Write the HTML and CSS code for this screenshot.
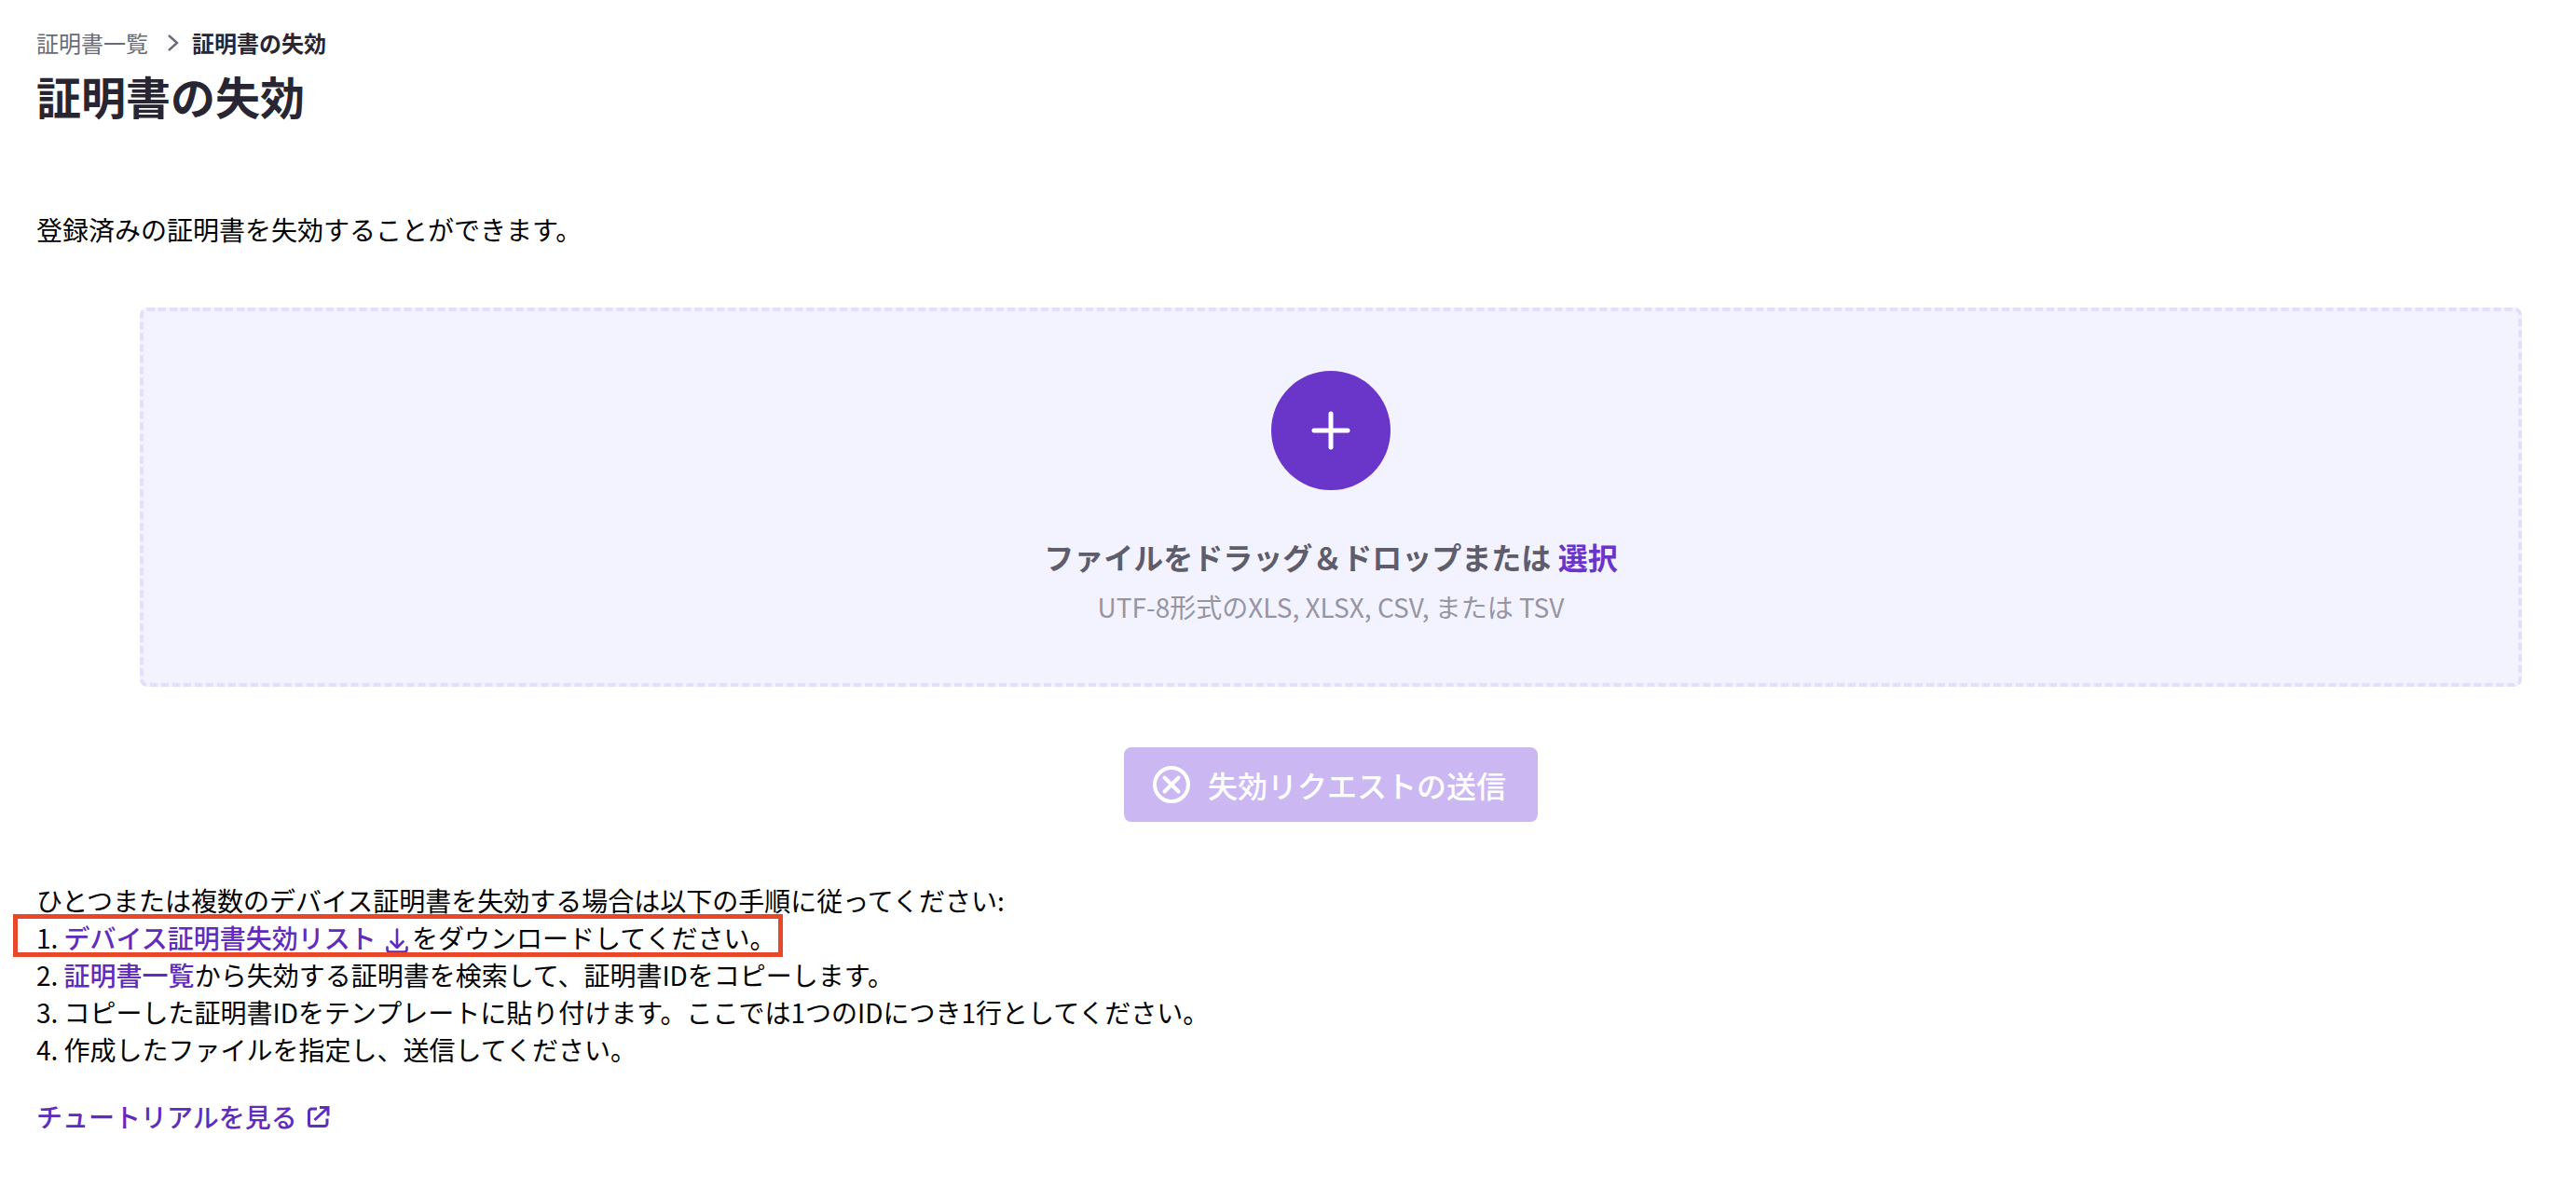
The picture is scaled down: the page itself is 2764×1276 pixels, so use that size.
FILE: index.html
```html
<!DOCTYPE html>
<html lang="ja">
<head>
  <meta charset="UTF-8">
  <title>証明書の失効</title>
  <link rel="stylesheet" href="styles.css">
</head>
<body>
  <div class="breadcrumb">
    <a href="#">証明書一覧</a>
    <svg class="crumb-arrow" viewBox="0 0 16 24" width="16" height="24"><path d="M3 4l9 8-9 8" fill="none" stroke="#6c6a76" stroke-width="2.400"/></svg>
    <strong>証明書の失効</strong>
  </div>
  <h1>証明書の失効</h1>

  <p class="intro">登録済みの証明書を失効することができます。</p>

  <div class="dropzone">
    <div class="add-circle">
      <svg viewBox="0 0 42 42" width="42" height="42"><path d="M21 3v36M3 21h36" fill="none" stroke="#fff" stroke-width="5" stroke-linecap="round"/></svg>
    </div>
    <p class="drop-title">ファイルをドラッグ＆ドロップまたは <a href="#">選択</a></p>
    <p class="drop-sub">UTF-8形式のXLS, XLSX, CSV, または TSV</p>
  </div>

  <div class="actions">
    <button class="submit" disabled>
      <svg viewBox="0 0 40 40" width="40" height="40"><circle cx="20" cy="20" r="18" fill="none" stroke="#fff" stroke-width="4"/><path d="M12.500 12.500l15 15M27.500 12.500l-15 15" fill="none" stroke="#fff" stroke-width="4" stroke-linecap="round"/></svg>
      失効リクエストの送信
    </button>
  </div>

  <div class="steps">
    <div class="highlight"></div>
    <p>ひとつまたは複数のデバイス証明書を失効する場合は以下の手順に従ってください:</p>
    <p>1. <a href="#">デバイス証明書失効リスト
      <svg class="icon-down" viewBox="0 0 24 28" width="24" height="28"><path d="M12 1.500V21M5.500 14.500L12 21l6.500-6.500M1.500 20.500V23a2.500 2.500 0 0 0 2.500 2.500h16a2.500 2.500 0 0 0 2.500-2.500v-2.500" fill="none" stroke="#5f2cbd" stroke-width="2.600" stroke-linecap="round" stroke-linejoin="round"/></svg></a>をダウンロードしてください。</p>
    <p>2. <a href="#">証明書一覧</a>から失効する証明書を検索して、証明書IDをコピーします。</p>
    <p>3. コピーした証明書IDをテンプレートに貼り付けます。ここでは1つのIDにつき1行としてください。</p>
    <p>4. 作成したファイルを指定し、送信してください。</p>
  </div>

  <a class="tutorial" href="#">チュートリアルを見る
    <svg viewBox="0 0 24 24" width="24" height="24"><path d="M10 4H4.500a3 3 0 0 0-3 3v13.500a2 2 0 0 0 2 2H18a3 3 0 0 0 3-3V14.500M7.500 16L22 2.500M13 2.500h9v9" fill="none" stroke="#5f2cbd" stroke-width="3"/></svg>
  </a>
</body>
</html>
```

FILE: styles.css
```css
* {
  margin: 0;
  padding: 0;
  box-sizing: border-box;
  font-family: "Noto Sans CJK JP", "Noto Sans", sans-serif;
}

body {
  background: #fff;
  color: #000;
  width: 2764px;
  height: 1276px;
  padding: 28px 0 0 39px;
  font-size: 28px;
  overflow: hidden;
}

a {
  color: #5f2cbd;
  text-decoration: none;
  font-weight: 500;
}

.breadcrumb {
  display: flex;
  align-items: center;
  height: 36px;
  font-size: 24px;
  line-height: 36px;
}

.breadcrumb a {
  color: #6c6a76;
  font-weight: 400;
}

.breadcrumb strong {
  color: #282632;
  font-weight: 700;
}

.crumb-arrow {
  margin: 0 12px 0 19px;
}

h1 {
  margin-top: 6px;
  color: #282632;
  font-size: 48px;
  font-weight: 700;
  line-height: 64px;
}

.intro {
  margin-top: 92px;
  line-height: 40px;
}

.dropzone {
  display: flex;
  flex-direction: column;
  align-items: center;
  width: 2556px;
  height: 407px;
  margin: 64px 0 0 111px;
  padding-top: 64px;
  background: #f3f3ff;
  border: 4px dashed #e6dcfb;
  border-radius: 8px;
}

.add-circle {
  display: flex;
  align-items: center;
  justify-content: center;
  width: 128px;
  height: 128px;
  border-radius: 50%;
  background: #6a35c9;
}

.drop-title {
  margin-top: 47px;
  color: #5f5d6b;
  font-size: 32px;
  font-weight: 700;
  line-height: 48px;
}

.drop-title a {
  color: #6a35c9;
  font-weight: 700;
}

.drop-sub {
  margin-top: 8px;
  color: #9695a1;
  font-size: 28px;
  line-height: 44px;
}

.actions {
  display: flex;
  justify-content: center;
  width: 2556px;
  margin: 65px 0 0 111px;
}

.submit {
  display: flex;
  align-items: center;
  justify-content: center;
  gap: 19px;
  width: 444px;
  height: 80px;
  padding-right: 3px;
  background: #cbb8f3;
  border: 0;
  border-radius: 8px;
  color: #fff;
  font-size: 32px;
  font-weight: 500;
}

.steps {
  position: relative;
  margin-top: 64px;
  line-height: 40px;
}

.steps svg {
  vertical-align: -6px;
  margin-left: 4px;
  margin-right: 4px;
}

.highlight {
  position: absolute;
  left: -25px;
  top: 35px;
  width: 826px;
  height: 46px;
  border: 5px solid #e8472a;
}

.tutorial {
  display: inline-flex;
  align-items: center;
  gap: 11px;
  margin-top: 32px;
  line-height: 40px;
}
```
